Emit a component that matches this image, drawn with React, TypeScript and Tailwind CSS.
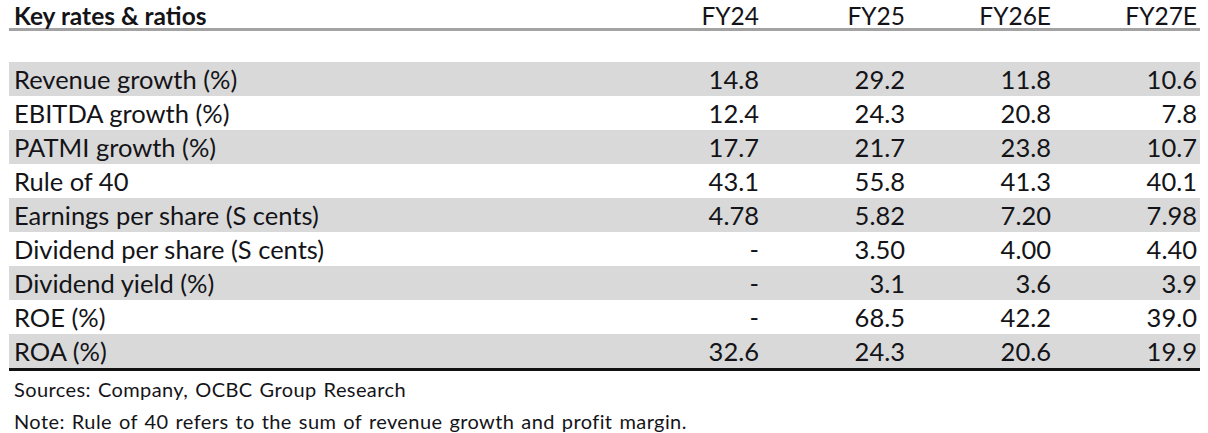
const years = ["FY24", "FY25", "FY26E", "FY27E"];

const rows: { label: string; values: string[] }[] = [
  { label: "Revenue growth (%)", values: ["14.8", "29.2", "11.8", "10.6"] },
  { label: "EBITDA growth (%)", values: ["12.4", "24.3", "20.8", "7.8"] },
  { label: "PATMI growth (%)", values: ["17.7", "21.7", "23.8", "10.7"] },
  { label: "Rule of 40", values: ["43.1", "55.8", "41.3", "40.1"] },
  { label: "Earnings per share (S cents)", values: ["4.78", "5.82", "7.20", "7.98"] },
  { label: "Dividend per share (S cents)", values: ["-", "3.50", "4.00", "4.40"] },
  { label: "Dividend yield (%)", values: ["-", "3.1", "3.6", "3.9"] },
  { label: "ROE (%)", values: ["-", "68.5", "42.2", "39.0"] },
  { label: "ROA (%)", values: ["32.6", "24.3", "20.6", "19.9"] },
];

export default function App() {
  return (
    <div
      className="w-[1208px] h-[433px] bg-white pl-[9px] pr-[8px] text-[#141418]"
      style={{ fontFamily: "Lato, 'Open Sans', sans-serif" }}
    >
      {/* header */}
      <div className="flex h-[31px] items-end border-b-[3px] border-[#a3a3a3] text-[24.5px] leading-[24px]">
        <div className="flex-1 pl-[5px] font-bold">Key rates &amp; ratios</div>
        {years.map((y) => (
          <div key={y} className="w-[146px] pr-[3px] text-right">
            {y}
          </div>
        ))}
      </div>

      <div className="h-[31px]" />

      {/* rows */}
      <div className="border-b-[3px] border-[#111]">
        {rows.map((r, i) => (
          <div
            key={r.label}
            className={`flex h-[34px] items-center text-[25.5px] ${i % 2 === 0 ? "bg-[#d9d9d9]" : "bg-white"}`}
          >
            <div className="flex-1 pl-[5px]">{r.label}</div>
            {r.values.map((v, j) => (
              <div key={j} className="w-[146px] pr-[3px] text-right">
                {v}
              </div>
            ))}
          </div>
        ))}
      </div>

      {/* footer */}
      <div className="pl-[5px] pt-[2px] text-[20px] tracking-[0.4px] [word-spacing:1.5px]">
        <div className="h-[32px] leading-[32px]">Sources: Company, OCBC Group Research</div>
        <div className="h-[32px] leading-[32px]">
          Note: Rule of 40 refers to the sum of revenue growth and profit margin.
        </div>
      </div>
    </div>
  );
}
